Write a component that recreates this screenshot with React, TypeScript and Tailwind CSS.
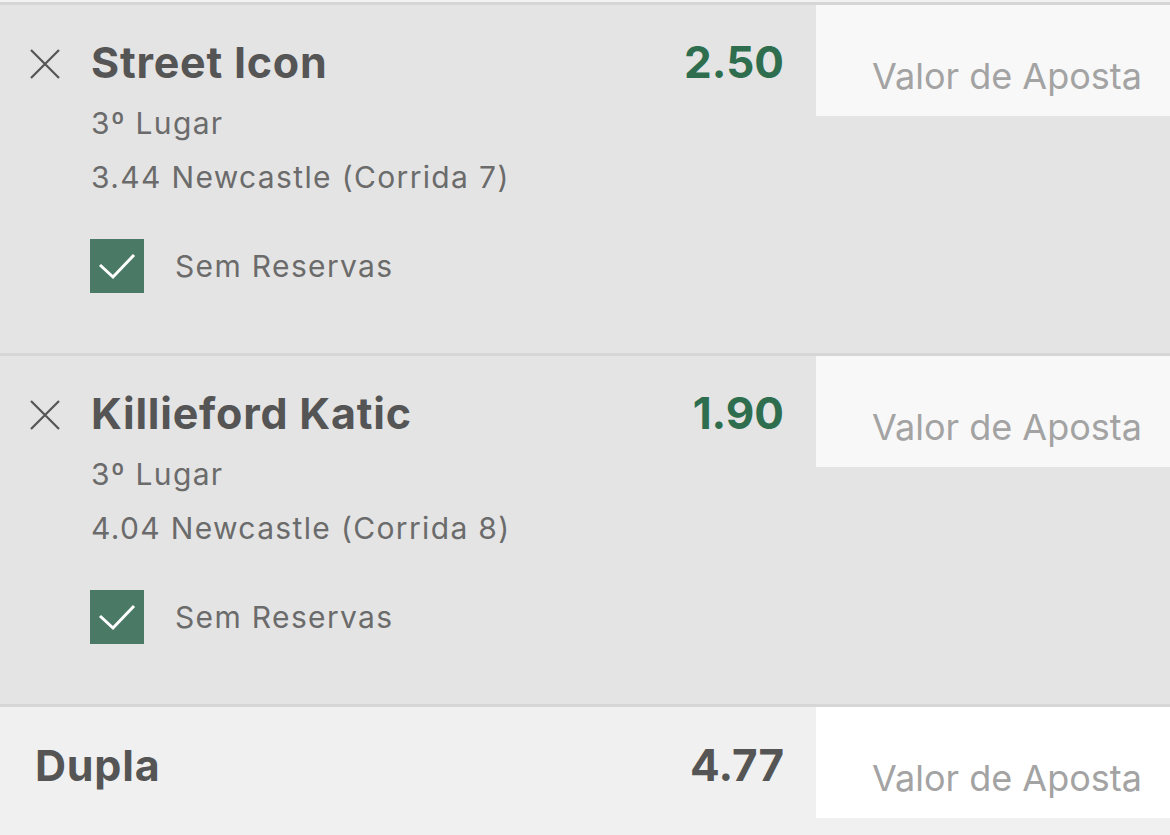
import React from "react";

type Bet = {
  name: string;
  odds: string;
  place: string;
  race: string;
};

const bets: Bet[] = [
  { name: "Street Icon", odds: "2.50", place: "3º Lugar", race: "3.44 Newcastle (Corrida 7)" },
  { name: "Killieford Katic", odds: "1.90", place: "3º Lugar", race: "4.04 Newcastle (Corrida 8)" },
];

function CloseIcon() {
  return (
    <svg width="30" height="30" viewBox="0 0 30 30" className="shrink-0">
      <path d="M1 1 L29 29 M29 1 L1 29" stroke="#555555" strokeWidth="2.2" fill="none" />
    </svg>
  );
}

function StakeBox({ white }: { white?: boolean }) {
  return (
    <div
      className={`w-[354px] h-[111px] shrink-0 flex items-center pl-[56px] pt-[31px] text-[36px] text-[#a3a3a3] ${
        white ? "bg-white" : "bg-[#f8f8f8]"
      }`}
    >
      Valor de Aposta
    </div>
  );
}

function BetRow({ bet }: { bet: Bet }) {
  return (
    <div className="flex h-[348px] bg-[#e4e4e4] border-b-[3px] border-[#d6d6d6] box-content">
      <div className="flex-1 flex flex-col pt-[31px] pl-[30px] pr-[32px]">
        <div className="flex items-center h-[52px]">
          <div className="w-[61px] flex items-center pt-[3px]">
            <CloseIcon />
          </div>
          <div className="flex-1 text-[43px] font-bold tracking-[0.018em] text-[#555555] leading-[52px]">{bet.name}</div>
          <div className="text-[44px] font-bold text-[#2e6e4f] leading-[52px]">{bet.odds}</div>
        </div>
        <div className="pl-[61px] mt-[8px] text-[30px] tracking-[0.045em] leading-[54px] text-[#6b6b6b]">
          <div>{bet.place}</div>
          <div>{bet.race}</div>
        </div>
        <div className="pl-[60px] mt-[35px] flex items-center gap-[31px]">
          <div className="w-[54px] h-[54px] bg-[#4a7a65] flex items-center justify-center">
            <svg width="54" height="54" viewBox="0 0 54 54">
              <path d="M10 26 L23 38 L44 16" stroke="#ffffff" strokeWidth="3" fill="none" />
            </svg>
          </div>
          <span className="text-[30px] tracking-[0.045em] text-[#6b6b6b]">Sem Reservas</span>
        </div>
      </div>
      <StakeBox />
    </div>
  );
}

export default function App() {
  return (
    <div className="w-[1170px] h-[835px] overflow-hidden bg-[#f0f0f0]" style={{ fontFamily: "Inter, 'Noto Sans', sans-serif" }}>
      <div className="h-[2px] bg-[#f2f2f2]" />
      <div className="border-t-[3px] border-[#d6d6d6]">
        {bets.map((bet, index) => (
          <BetRow key={index} bet={bet} />
        ))}
        <div className="flex h-[129px] bg-[#f0f0f0]">
          <div className="flex-1 flex items-start pt-[32px] pl-[35px] pr-[32px]">
            <div className="flex-1 text-[43px] font-bold tracking-[0.018em] text-[#555555] leading-[52px]">Dupla</div>
            <div className="text-[44px] font-bold text-[#555555] leading-[52px]">4.77</div>
          </div>
          <StakeBox white />
        </div>
      </div>
    </div>
  );
}
